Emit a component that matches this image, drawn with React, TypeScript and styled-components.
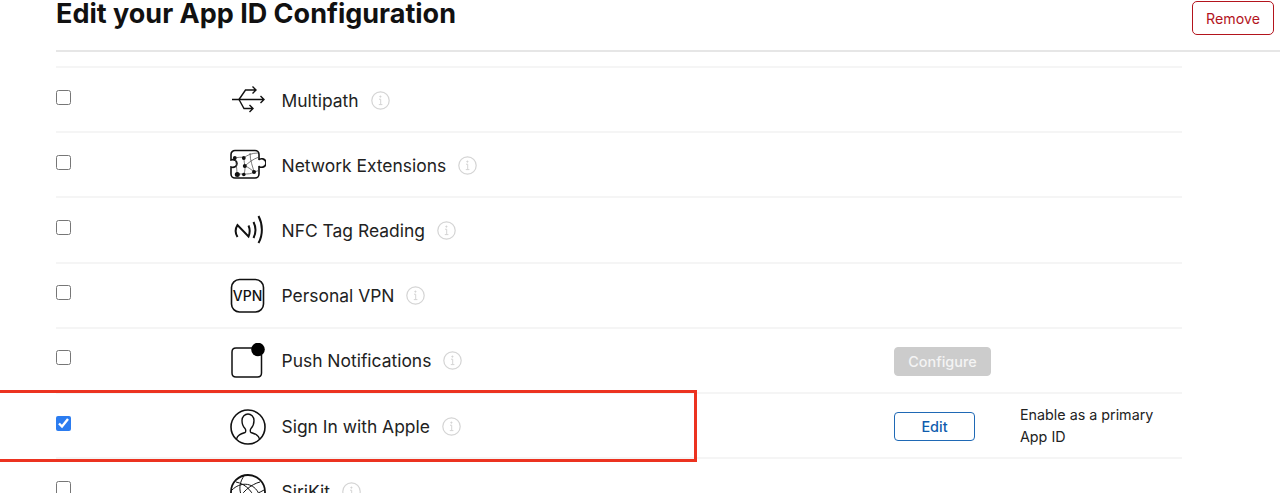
import styled, { createGlobalStyle } from "styled-components";
import { ReactNode } from "react";

const GlobalStyle = createGlobalStyle`
    html, body {
        margin: 0;
        height: 493px;
        overflow: hidden;
        background: #fff;
        font-family: Inter, "Liberation Sans", sans-serif;
        color: #1d1d1f;
    }
`;
const Page = styled.div`
    padding-left: 56px;
`;
const Header = styled.header`
    display: flex;
    justify-content: space-between;
    align-items: flex-start;
    height: 50px;
    border-bottom: 2px solid #e6e6e6;
`;
const Title = styled.h1`
    margin: 0;
    font-size: 27px;
    line-height: 28px;
    font-weight: 700;
    color: #111;
`;
const RemoveBtn = styled.button`
    width: 82px;
    height: 34px;
    margin: 1px 6px 0 0;
    border: 1px solid #b3141d;
    border-radius: 5px;
    background: #fff;
    color: #b3141d;
    font: 14.2px Inter, "Liberation Sans", sans-serif;
`;
const List = styled.div`
    width: 1126px;
    margin-top: 14px;
    border-top: 2px solid #f5f5f5;
`;
const Row = styled.div`
    position: relative;
    display: grid;
    grid-template-columns: 174px 52px 612px 126px 1fr;
    align-items: center;
    height: 63.2px;
    border-bottom: 2px solid #f5f5f5;
`;
const Check = styled.input`
    width: 15px;
    height: 15px;
    margin: 0 0 5px;
    accent-color: #2b7cf0;
`;
const IconCell = styled.div`
    display: flex;
    width: 36px;
    height: 36px;
    margin-top: 2px;
`;
const Label = styled.div`
    display: flex;
    align-items: center;
    gap: 12px;
    margin: 1px 0 0 -0.5px;
    font-size: 17.45px;
    color: #222;
`;
const ActionBtn = styled.button<{ $kind: "disabled" | "outline" }>`
    height: 29px;
    width: ${(p) => (p.$kind === "disabled" ? "97px" : "81px")};
    border-radius: 4px;
    border: 1px solid ${(p) => (p.$kind === "disabled" ? "#ccc" : "#1f69b5")};
    background: ${(p) => (p.$kind === "disabled" ? "#ccc" : "#fff")};
    color: ${(p) => (p.$kind === "disabled" ? "#f4f4f4" : "#0f5cad")};
    font: 500 14.4px Inter, "Liberation Sans", sans-serif;
    margin-top: 2px;
`;
const Note = styled.div`
    font-size: 14.3px;
    line-height: 22px;
    color: #222;
    margin-top: 1px;
`;
const Highlight = styled.div`
    position: absolute;
    left: -59px;
    top: -4px;
    width: 700px;
    height: 72px;
    box-sizing: border-box;
    border: 3px solid #ec3320;
    pointer-events: none;
`;

const Info = () => (
    <svg width="19" height="19" viewBox="0 0 19 19" fill="none" stroke="#d4d4d4">
        <circle cx="9.5" cy="9.5" r="8.7" strokeWidth="1.2" />
        <path d="M8 8.2h1.7v5.3M7.8 13.6h3.6" strokeWidth="1" />
        <circle cx="9.4" cy="5.6" r="0.6" fill="#d4d4d4" />
    </svg>
);

const Glyph = ({ children }: { children: ReactNode }) => (
    <svg width="36" height="36" viewBox="0 0 36 36" fill="none" stroke="#111" strokeWidth="1.4">
        {children}
    </svg>
);

const icons: Record<string, ReactNode> = {
    multipath: (
        <Glyph>
            <path d="M2 16.500h32M30.500 13l3.500 3.500-3.500 3.500" />
            <path d="M9 16.500L15.500 7H26M22.500 3.500L26 7l-3.500 3.500" />
            <path d="M9 16.500L14 25.500H23M19.500 22l3.500 3.500-3.500 3.500" />
        </Glyph>
    ),
    network: (
        <Glyph>
            <path
                d="M5 2.500H25a4 4 0 0 1 4 4V12c1-2 7-2 7 3s-6 5-7 3V26a4 4 0 0 1-4 4H5a4 4 0 0 1-4-4V19c3 1 6-.5 6-3.500s-3-4.500-6-3.500V6.500a4 4 0 0 1 4-4z"
                strokeWidth="1.6"
            />
            <g stroke="#444" strokeWidth="0.7">
                <path d="M5 10c4-1 9-1 9 0M14 10c3-3 8-5 14-5M14 10c0 3 .5 6 1 8M15 18c3 1 7 4 9 6M14 26c-2 0-5 0-7 0M14 26c4 0 7 0 10-2M24 24c2-.5 4-1 5-2M7 26c0-5-1-12-2-16M14 26c1-3 1-5 1-8M15 18c3-3 8-7 14-9M20 5c0 8 3 14 4 19" />
            </g>
            <g fill="#111" stroke="none">
                <circle cx="4.800" cy="10" r="1.900" />
                <circle cx="13.800" cy="10" r="1.900" />
                <circle cx="14.800" cy="18" r="2" />
                <circle cx="7.300" cy="26.500" r="2.500" />
                <circle cx="13.800" cy="26.500" r="1.800" />
                <circle cx="24" cy="24" r="2" />
            </g>
        </Glyph>
    ),
    nfc: (
        <Glyph>
            <path d="M7.500 24C5 20 5 16 7.500 12L18.500 23.500c1.500-3.500 1.500-7.500 0-11" strokeWidth="2" />
            <path d="M23.500 9c2.500 5 2.500 11 0 16M28.500 3c4.500 8.500 4.500 19 0 27" strokeWidth="2" />
        </Glyph>
    ),
    vpn: (
        <Glyph>
            <rect x="1.500" y="1.500" width="32" height="32.500" rx="8" strokeWidth="1.600" />
            <text x="17.500" y="23" textAnchor="middle" fontFamily="Inter, Liberation Sans, sans-serif" fontSize="14" fontWeight="500" fill="#111" stroke="none">
                VPN
            </text>
        </Glyph>
    ),
    push: (
        <Glyph>
            <path d="M24 5H6C3.500 5 2 6.500 2 9v21c0 2.500 1.500 4 4 4h21.500c2.500 0 4-1.500 4-4V12" strokeWidth="1.500" />
            <circle cx="28" cy="6.500" r="6.800" fill="#000" stroke="none" />
        </Glyph>
    ),
    person: (
        <Glyph>
            <circle cx="18" cy="18" r="17" strokeWidth="1.600" />
            <path d="M6.500 30c1-4 4-5 8.500-6.500 1-.5 1-3 0-4-2-2-3-5-3-8 0-4 3-6.500 6-6.500s6 2.500 6 6.500c0 3-1 6-3 8-1 1-1 3.500 0 4 4.500 1.500 7.500 2.500 8.500 6.500" strokeWidth="1.400" />
        </Glyph>
    ),
    siri: (
        <Glyph>
            <circle cx="18" cy="18" r="17" strokeWidth="1.800" />
            <path d="M2 16c8-8 20-8 26 2M6 8c10 2 18 10 20 22M14 2c-6 8-6 20 4 28M30 8C22 10 10 18 8 30M2 22c10 2 22 0 32-6" strokeWidth="1" />
        </Glyph>
    ),
};

type RowData = {
    name: string;
    icon: string;
    checked?: boolean;
    action?: "disabled" | "outline";
    note?: boolean;
};

const rows: RowData[] = [
    { name: "Multipath", icon: "multipath" },
    { name: "Network Extensions", icon: "network" },
    { name: "NFC Tag Reading", icon: "nfc" },
    { name: "Personal VPN", icon: "vpn" },
    { name: "Push Notifications", icon: "push", action: "disabled" },
    { name: "Sign In with Apple", icon: "person", checked: true, action: "outline", note: true },
    { name: "SiriKit", icon: "siri" },
];

export default function App() {
    return (
        <Page>
            <GlobalStyle />
            <Header>
                <Title>Edit your App ID Configuration</Title>
                <RemoveBtn>Remove</RemoveBtn>
            </Header>
            <List>
                {rows.map((row) => (
                    <Row key={row.name}>
                        <Check type="checkbox" defaultChecked={row.checked} />
                        <IconCell>{icons[row.icon]}</IconCell>
                        <Label>
                            {row.name}
                            <Info />
                        </Label>
                        <div>
                            {row.action && (
                                <ActionBtn $kind={row.action}>
                                    {row.action === "disabled" ? "Configure" : "Edit"}
                                </ActionBtn>
                            )}
                        </div>
                        {row.note && (
                            <Note>
                                Enable as a primary
                                <br />
                                App ID
                            </Note>
                        )}
                        {row.checked && <Highlight />}
                    </Row>
                ))}
            </List>
        </Page>
    );
}
